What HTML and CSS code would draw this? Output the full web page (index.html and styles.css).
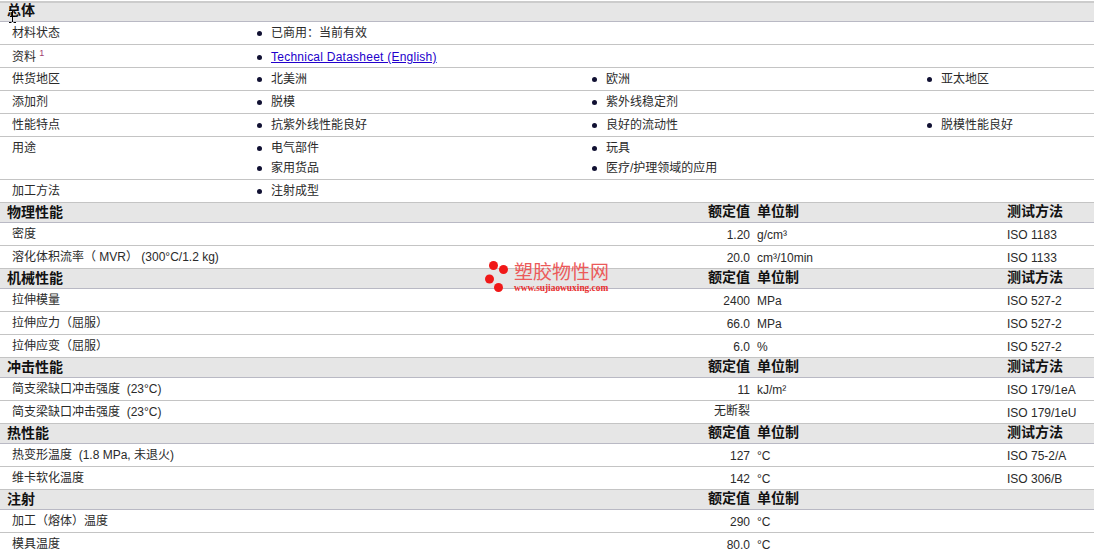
FILE: index.html
```html
<!DOCTYPE html>
<html lang="zh-CN">
<head>
<meta charset="utf-8">
<title>塑胶物性表</title>
<link rel="stylesheet" href="styles.css">
</head>
<body>
<main class="sheet">
  <div class="head first"><span class="head-name">总体</span></div>
  <div class="prop"><div class="label">材料状态</div><ul class="list"><li>已商用：当前有效</li></ul></div>
  <div class="prop low"><div class="label">资料 <sup>1</sup></div><ul class="list"><li><a href="#">Technical Datasheet (English)</a></li></ul></div>
  <div class="prop"><div class="label">供货地区</div><ul class="list"><li>北美洲</li><li>欧洲</li><li>亚太地区</li></ul></div>
  <div class="prop"><div class="label">添加剂</div><ul class="list"><li>脱模</li><li>紫外线稳定剂</li></ul></div>
  <div class="prop"><div class="label">性能特点</div><ul class="list"><li>抗紫外线性能良好</li><li>良好的流动性</li><li>脱模性能良好</li></ul></div>
  <div class="prop"><div class="label">用途</div><ul class="list"><li>电气部件</li><li>玩具</li><li class="brk">家用货品</li><li>医疗/护理领域的应用</li></ul></div>
  <div class="prop"><div class="label">加工方法</div><ul class="list"><li>注射成型</li></ul></div>

  <div class="head"><span class="head-name">物理性能</span><span class="val">额定值</span><span class="unit">单位制</span><span class="test">测试方法</span></div>
  <div class="row"><span class="name">密度</span><span class="val">1.20</span><span class="unit">g/cm³</span><span class="test">ISO 1183</span></div>
  <div class="row"><span class="name">溶化体积流率（ MVR） (300°C/1.2 kg)</span><span class="val">20.0</span><span class="unit">cm³/10min</span><span class="test">ISO 1133</span></div>

  <div class="head"><span class="head-name">机械性能</span><span class="val">额定值</span><span class="unit">单位制</span><span class="test">测试方法</span></div>
  <div class="row"><span class="name">拉伸模量</span><span class="val">2400</span><span class="unit">MPa</span><span class="test">ISO 527-2</span></div>
  <div class="row"><span class="name">拉伸应力（屈服）</span><span class="val">66.0</span><span class="unit">MPa</span><span class="test">ISO 527-2</span></div>
  <div class="row"><span class="name">拉伸应变（屈服）</span><span class="val">6.0</span><span class="unit">%</span><span class="test">ISO 527-2</span></div>

  <div class="head"><span class="head-name">冲击性能</span><span class="val">额定值</span><span class="unit">单位制</span><span class="test">测试方法</span></div>
  <div class="row"><span class="name">简支梁缺口冲击强度&nbsp; (23°C)</span><span class="val">11</span><span class="unit">kJ/m²</span><span class="test">ISO 179/1eA</span></div>
  <div class="row"><span class="name">简支梁缺口冲击强度&nbsp; (23°C)</span><span class="val cjk">无断裂</span><span class="unit"></span><span class="test">ISO 179/1eU</span></div>

  <div class="head"><span class="head-name">热性能</span><span class="val">额定值</span><span class="unit">单位制</span><span class="test">测试方法</span></div>
  <div class="row"><span class="name">热变形温度&nbsp; (1.8 MPa, 未退火)</span><span class="val">127</span><span class="unit">°C</span><span class="test">ISO 75-2/A</span></div>
  <div class="row"><span class="name">维卡软化温度</span><span class="val">142</span><span class="unit">°C</span><span class="test">ISO 306/B</span></div>

  <div class="head"><span class="head-name">注射</span><span class="val">额定值</span><span class="unit">单位制</span></div>
  <div class="row"><span class="name">加工（熔体）温度</span><span class="val">290</span><span class="unit">°C</span></div>
  <div class="row"><span class="name">模具温度</span><span class="val">80.0</span><span class="unit">°C</span></div>
</main>

<svg class="cursor" width="7" height="13" viewBox="0 0 7 13" aria-hidden="true"><path d="M0 .5h2.500M4.500 .5H7M3.500 1v11M1 6.500h5M0 12.500h2.500M4.500 12.500H7" stroke="#000" fill="none"/></svg>

<div class="mark">
  <svg class="mark-dots" width="28" height="34" viewBox="0 0 28 34" aria-hidden="true"><circle cx="8.500" cy="4.500" r="4.500"/><circle cx="18.500" cy="8.500" r="4.500"/><circle cx="4.500" cy="18" r="4.500"/><circle cx="13.500" cy="26.500" r="4.500"/></svg>
  <div class="mark-text"><div class="mark-title">塑胶物性网</div><div class="mark-url">www.sujiaowuxing.com</div></div>
</div>
</body>
</html>
```
FILE: styles.css
```css
* { box-sizing: border-box; }
html, body { margin: 0; padding: 0; background: #fff; }
body {
  position: relative;
  width: 1094px;
  height: 555px;
  overflow: hidden;
  padding-top: 1px;
  font: 12px/16px "Liberation Sans", "Noto Sans CJK SC", sans-serif;
  color: #2a2a2a;
}
.sheet { display: block; }
.head {
  display: flex;
  height: 20px;
  padding-left: 7px;
  background-color: #e6e6e6;
  background-image: radial-gradient(#dedede 0.5px, transparent 0.6px);
  background-size: 4px 4px;
  border-bottom: 1px solid #b9b9c4;
  font-weight: 700;
  font-size: 14px;
  line-height: 17px;
  color: #111;
}
.head.first { height: 21px; border-top: 2px solid #ccc; line-height: 15px; }
.head-name { width: 693px; padding-top: 1px; }
.head.first .head-name { padding-top: 0; }
.head .val { width: 50px; }
.row, .prop { display: flex; border-bottom: 1px solid #c4c4c4; }
.row { height: 23px; padding: 4px 0 0 12px; }
.name { width: 688px; margin-top: -1px; white-space: nowrap; }
.val { width: 50px; text-align: right; white-space: nowrap; }
.val.cjk { margin-top: -2px; }
.unit { width: 250px; margin-left: 7px; flex: none; }
.test { white-space: nowrap; }
.prop { padding: 3px 0 3px 12px; min-height: 23px; }
.prop.low { padding-top: 4px; padding-bottom: 2px; }
.label { width: 240px; flex: none; }
sup { font-size: 9px; line-height: 0; color: #a04070; vertical-align: 5px; }
.list {
  display: grid;
  flex: 1;
  min-width: 0;
  grid-template-columns: 335px 335px 1fr;
  row-gap: 4px;
  list-style: none;
  margin: 0;
  padding: 0;
}
.list li { position: relative; padding-left: 19px; white-space: nowrap; }
.list li::before {
  content: "";
  position: absolute;
  left: 5px;
  top: 6px;
  width: 5px;
  height: 5px;
  border-radius: 50%;
  background: #111133;
}
.brk { grid-column: 1; }
a { color: #2200cc; letter-spacing: .24px; }
.cursor { position: absolute; left: 9px; top: 10px; }
.mark { position: absolute; left: 485px; top: 261px; display: flex; gap: 1px; }
.mark-dots { fill: #f01818; }
.mark-text { color: #ec5a5a; }
.mark-title { font-size: 19px; line-height: 22px; white-space: nowrap; margin-top: 1px; }
.mark-url { font: 700 9.400px/9px "Liberation Serif", serif; color: #e83030; white-space: nowrap; }
```
